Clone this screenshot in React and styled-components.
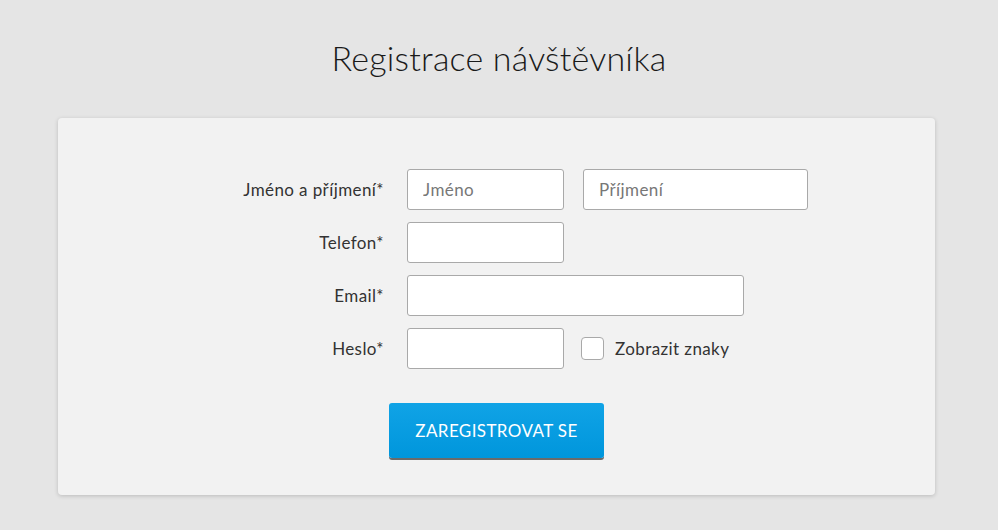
import React from "react";
import styled, { createGlobalStyle } from "styled-components";

const GlobalStyle = createGlobalStyle`
  html, body {
    margin: 0;
    padding: 0;
    background: #e5e5e5;
    font-family: "Lato", "Open Sans", sans-serif;
    color: #333;
  }
  * { box-sizing: border-box; }
`;

const Page = styled.div`
  width: 998px;
  min-height: 530px;
  padding-top: 37px;
`;

const Title = styled.h1`
  margin: 0;
  text-align: center;
  font-size: 34px;
  font-weight: 300;
  letter-spacing: 0.2px;
  color: #1a1a1a;
  line-height: 42px;
`;

const Card = styled.div`
  margin: 39px 0 0 58px;
  width: 877px;
  background: #f2f2f2;
  border-radius: 4px;
  box-shadow: 0 1px 4px rgba(0, 0, 0, 0.18);
  padding: 51px 0 37px;
`;

const Form = styled.form`
  display: flex;
  flex-direction: column;
  gap: 12px;
`;

const Row = styled.div`
  display: flex;
  align-items: center;
  gap: 19px;
`;

const Label = styled.label`
  width: 326px;
  margin-right: 4px;
  text-align: right;
  font-size: 17px;
  letter-spacing: 0.4px;
  color: #333;
`;

const Input = styled.input`
  width: ${(p) => p.$w}px;
  height: 41px;
  border: 1px solid #a9a9a9;
  border-radius: 3px;
  background: #fff;
  padding: 0 15px;
  font-family: "Lato", sans-serif;
  font-size: 17px;
  letter-spacing: 0.4px;
  color: #333;
  &::placeholder {
    color: #777;
  }
`;

const CheckWrap = styled.label`
  display: flex;
  align-items: center;
  gap: 11px;
  font-size: 17px;
  letter-spacing: 0.4px;
  color: #333;
  margin-left: -2px;
`;

const Box = styled.span`
  width: 23px;
  height: 23px;
  border: 1px solid #a9a9a9;
  border-radius: 4px;
  background: #fff;
`;

const Actions = styled.div`
  display: flex;
  justify-content: center;
  margin-top: 22px;
`;

const Button = styled.button`
  width: 215px;
  height: 55px;
  border: none;
  border-radius: 3px;
  background: linear-gradient(#10a3e6, #0096dc);
  box-shadow: 0 2px 0 #6b6b6b;
  color: #fff;
  font-family: "Lato", sans-serif;
  font-size: 17px;
  letter-spacing: 0.4px;
  text-transform: uppercase;
  cursor: pointer;
`;

export default function App() {
  return (
    <Page>
      <GlobalStyle />
      <Title>Registrace návštěvníka</Title>
      <Card>
        <Form>
          <Row>
            <Label>Jméno a příjmení*</Label>
            <Input $w={157} placeholder="Jméno" />
            <Input $w={225} placeholder="Příjmení" />
          </Row>
          <Row>
            <Label>Telefon*</Label>
            <Input $w={157} />
          </Row>
          <Row>
            <Label>Email*</Label>
            <Input $w={337} />
          </Row>
          <Row>
            <Label>Heslo*</Label>
            <Input $w={157} />
            <CheckWrap>
              <Box />
              Zobrazit znaky
            </CheckWrap>
          </Row>
          <Actions>
            <Button type="button">Zaregistrovat se</Button>
          </Actions>
        </Form>
      </Card>
    </Page>
  );
}
